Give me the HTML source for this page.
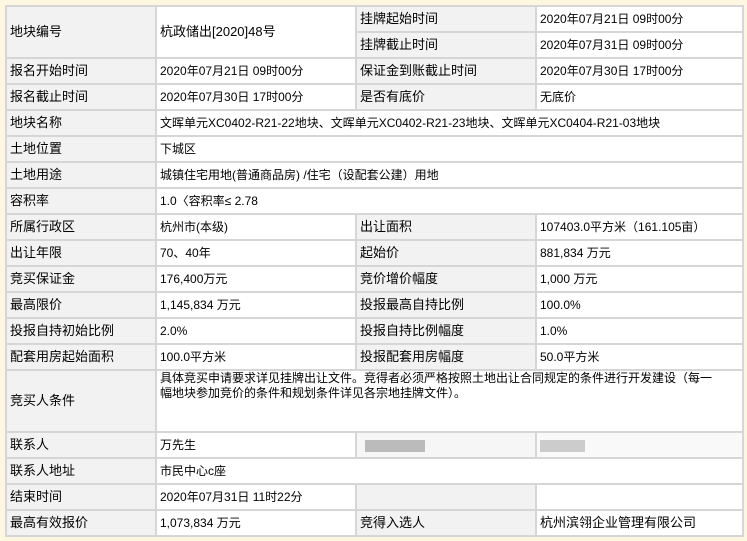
<!DOCTYPE html><html><head><meta charset="utf-8"><style>
body{margin:0;background:#fdf7e2;width:747px;height:541px;overflow:hidden;font-family:"Liberation Sans","Noto Sans CJK SC",sans-serif;font-size:12px;color:#000}
table{position:absolute;left:5px;top:5px;width:737px;border-collapse:collapse;table-layout:fixed;background:#fff}
td{border:2px solid #d6d6d6;height:24px;padding:0 3px;white-space:nowrap;overflow:hidden;line-height:14px}
td.l{background:#f2f2f2;font-size:13px}
.b{display:inline-block;height:12px;background:#bbb;vertical-align:middle}
</style></head><body>
<table>
<col style="width:150px"><col style="width:200px"><col style="width:180px"><col style="width:207px">
<tr><td class="l" rowspan="2">地块编号</td><td rowspan="2" style="font-size:13px">杭政储出[2020]48号</td><td class="l">挂牌起始时间</td><td>2020年07月21日 09时00分</td></tr>
<tr><td class="l">挂牌截止时间</td><td>2020年07月31日 09时00分</td></tr>
<tr><td class="l">报名开始时间</td><td>2020年07月21日 09时00分</td><td class="l">保证金到账截止时间</td><td>2020年07月30日 17时00分</td></tr>
<tr><td class="l">报名截止时间</td><td>2020年07月30日 17时00分</td><td class="l">是否有底价</td><td>无底价</td></tr>
<tr><td class="l">地块名称</td><td colspan="3">文晖单元XC0402-R21-22地块、文晖单元XC0402-R21-23地块、文晖单元XC0404-R21-03地块</td></tr>
<tr><td class="l">土地位置</td><td colspan="3">下城区</td></tr>
<tr><td class="l">土地用途</td><td colspan="3">城镇住宅用地(普通商品房) /住宅（设配套公建）用地</td></tr>
<tr><td class="l">容积率</td><td colspan="3">1.0〈容积率≤ 2.78</td></tr>
<tr><td class="l">所属行政区</td><td>杭州市(本级)</td><td class="l">出让面积</td><td>107403.0平方米（161.105亩）</td></tr>
<tr><td class="l">出让年限</td><td>70、40年</td><td class="l">起始价</td><td>881,834 万元</td></tr>
<tr><td class="l">竞买保证金</td><td>176,400万元</td><td class="l">竞价增价幅度</td><td>1,000 万元</td></tr>
<tr><td class="l">最高限价</td><td>1,145,834 万元</td><td class="l">投报最高自持比例</td><td>100.0%</td></tr>
<tr><td class="l">投报自持初始比例</td><td>2.0%</td><td class="l">投报自持比例幅度</td><td>1.0%</td></tr>
<tr><td class="l">配套用房起始面积</td><td>100.0平方米</td><td class="l">投报配套用房幅度</td><td>50.0平方米</td></tr>
<tr><td class="l" style="height:60px">竞买人条件</td><td colspan="3" style="white-space:normal;vertical-align:top;line-height:15px">具体竞买申请要求详见挂牌出让文件。竞得者必须严格按照土地出让合同规定的条件进行开发建设（每一<br>幅地块参加竞价的条件和规划条件详见各宗地挂牌文件）。</td></tr>
<tr><td class="l">联系人</td><td>万先生</td><td style="background:#f6f6f6"><span class="b" style="width:60px;margin-left:5px"></span></td><td style="background:#f9f9f9"><span class="b" style="width:45px;background:#ccc"></span></td></tr>
<tr><td class="l">联系人地址</td><td colspan="3">市民中心c座</td></tr>
<tr><td class="l">结束时间</td><td>2020年07月31日 11时22分</td><td class="l"></td><td></td></tr>
<tr><td class="l">最高有效报价</td><td>1,073,834 万元</td><td class="l">竞得入选人</td><td style="font-size:13px">杭州滨翎企业管理有限公司</td></tr>
</table>
</body></html>
